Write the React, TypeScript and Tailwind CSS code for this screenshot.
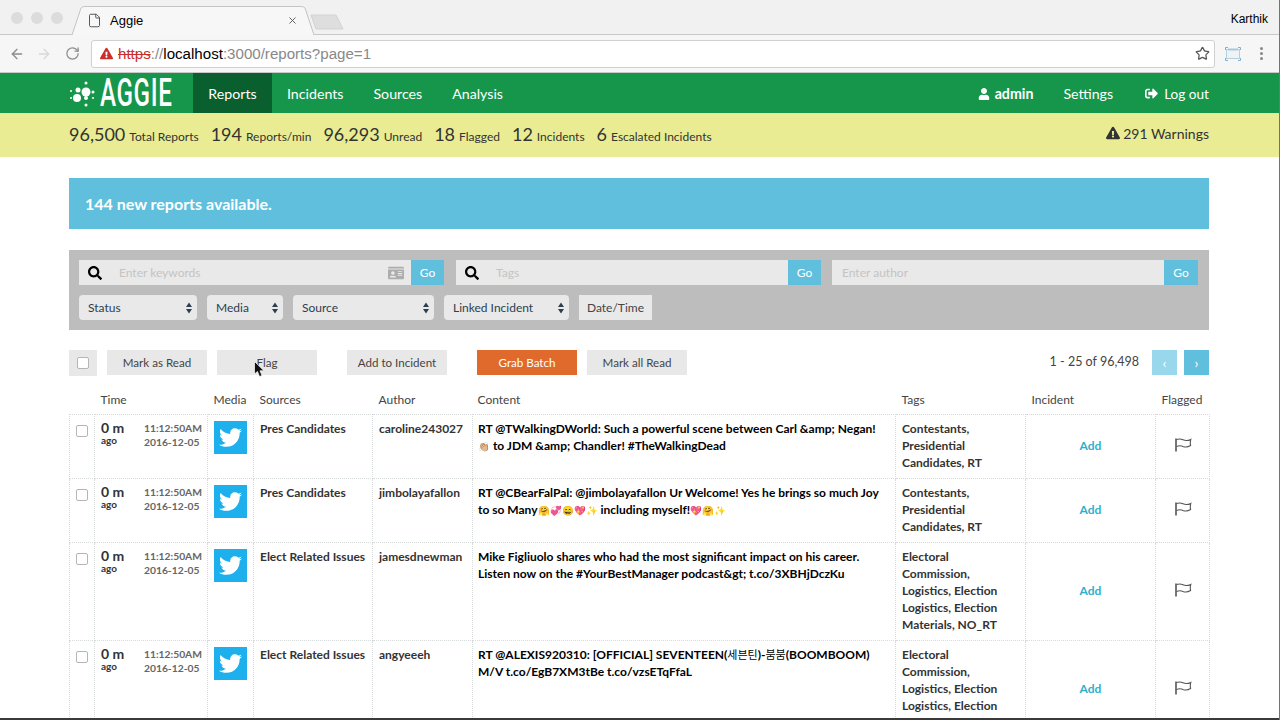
import type { ReactNode } from "react"
import { ArrowLeft, ArrowRight, RotateCw, Star, X, File } from "lucide-react"
import { FaSearch, FaUser, FaExclamationTriangle, FaTwitter, FaIdCard, FaSignOutAlt } from "react-icons/fa"

function Em({ children }: { children: ReactNode }) {
  return <span className="text-[9.5px] font-normal">{children}</span>
}

function Ko({ children }: { children: ReactNode }) {
  return <span className="text-[11px] font-normal">{children}</span>
}

const rows: { source: string; author: string; content: ReactNode; tags: string; h: string }[] = [
  {
    source: "Pres Candidates",
    author: "caroline243027",
    content: (
      <>
        RT @TWalkingDWorld: Such a powerful scene between Carl &amp;amp; Negan! <Em>👏🏼</Em> to JDM &amp;amp; Chandler! #TheWalkingDead
      </>
    ),
    tags: "Contestants, Presidential Candidates, RT",
    h: "h-[64px]",
  },
  {
    source: "Pres Candidates",
    author: "jimbolayafallon",
    content: (
      <>
        RT @CBearFalPal: @jimbolayafallon Ur Welcome! Yes he brings so much Joy to so Many<Em>🤗💞😄💖✨</Em> including myself!<Em>💖🤗✨</Em>
      </>
    ),
    tags: "Contestants, Presidential Candidates, RT",
    h: "h-[64px]",
  },
  {
    source: "Elect Related Issues",
    author: "jamesdnewman",
    content: "Mike Figliuolo shares who had the most significant impact on his career. Listen now on the #YourBestManager podcast&gt; t.co/3XBHjDczKu",
    tags: "Electoral Commission, Logistics, Election Logistics, Election Materials, NO_RT",
    h: "h-[98px]",
  },
  {
    source: "Elect Related Issues",
    author: "angyeeeh",
    content: (
      <>
        RT @ALEXIS920310: [OFFICIAL] SEVENTEEN(<Ko>세븐틴</Ko>)-<Ko>붐붐</Ko>(BOOMBOOM) M/V t.co/EgB7XM3tBe t.co/vzsETqFfaL
      </>
    ),
    tags: "Electoral Commission, Logistics, Election Logistics, Election Materials, NO_RT",
    h: "h-[98px]",
  },
]

function Carets() {
  return (
    <svg width="6" height="12" viewBox="0 0 6 12" className="text-[#2c3e50]" fill="currentColor">
      <path d="M3 0.5 L6 5 H0 Z M3 11.5 L0 7 H6 Z" />
    </svg>
  )
}

function Select({ label, w }: { label: string; w: string }) {
  return (
    <div className={`${w} h-[25px] flex items-center justify-between pl-[9px] pr-[5px] bg-[#e9e9e9] rounded-[4px] text-[12px] text-[#2c3e50]`}>
      {label}
      <Carets />
    </div>
  )
}

function SearchBox({ placeholder, w, goW = "w-[33px]", search, card }: { placeholder: string; w: string; goW?: string; search?: boolean; card?: boolean }) {
  return (
    <div className={`${w} h-[25px] flex bg-[#e9e9e9]`}>
      {search && (
        <div className="w-[40px] flex items-center pl-[9px] text-black">
          <FaSearch size={14} />
        </div>
      )}
      <div className={`flex-1 flex items-center text-[12px] text-[#c4c4c4] ${search ? "" : "pl-[10px]"}`}>{placeholder}</div>
      {card && (
        <div className="flex items-center pr-[7px] text-[#adadad]">
          <FaIdCard size={16} />
        </div>
      )}
      <div className={`${goW} flex items-center justify-center bg-[#5fbfdd] text-[12px] text-white`}>Go</div>
    </div>
  )
}

function ToolButton({ label, className }: { label: string; className: string }) {
  return <div className={`w-[100px] h-[25px] flex items-center justify-center pt-[1px] text-[11.6px] ${className}`}>{label}</div>
}

function Stat({ n, label }: { n: string; label: string }) {
  return (
    <span className="text-[12px] mr-[12px]">
      <span className="text-[18px] mr-[4px]">{n}</span>
      {label}
    </span>
  )
}

function FlagIcon() {
  return (
    <svg width="17" height="14" viewBox="0 0 17 14" fill="none" stroke="#555" strokeWidth="1.1">
      <path d="M1 0.5 V13.5" strokeWidth="1.6" />
      <path d="M1.5 1.5 C4 0.6 6 0.8 8 1.8 C10.5 3 13 2.8 15.8 1.4 C15.2 3.4 15 5 15.6 7.5 C13 9 10.5 9.4 8 8.4 C6 7.4 4 7.4 1.5 8.4" />
    </svg>
  )
}

function Logo() {
  return (
    <div className="flex items-center w-[124px]">
      <svg width="28" height="28" viewBox="0 0 28 28" fill="white" className="shrink-0">
        <circle cx="8" cy="19" r="4" />
        <circle cx="17" cy="13" r="4.5" />
        <circle cx="9" cy="11" r="2.5" />
        <circle cx="17" cy="4" r="1.5" />
        <circle cx="17" cy="19" r="2" />
        <circle cx="17" cy="26" r="1.5" />
        <circle cx="24" cy="13" r="1.5" />
        <circle cx="24" cy="19" r="1" />
        <circle cx="2" cy="12" r="1" />
        <circle cx="2" cy="19" r="1" />
      </svg>
      <span className="ml-[3px] font-['Roboto',sans-serif] text-[39px] leading-none font-medium text-white tracking-[1px] origin-left scale-x-[0.62] whitespace-nowrap">
        AGGIE
      </span>
    </div>
  )
}

export default function App() {
  return (
    <div className="h-screen overflow-hidden bg-white font-['Lato','Noto_Sans_CJK_KR',sans-serif] text-[#333] relative">
      {/* Browser chrome */}
      <div className="h-[35px] bg-[#f1f1f1] flex items-end border-b border-[#c8c8c8] relative">
        <div className="flex gap-[8px] pl-[11px] self-start pt-[12px] w-[72px]">
          <span className="w-[12px] h-[12px] rounded-full bg-[#dcdcdc]" />
          <span className="w-[12px] h-[12px] rounded-full bg-[#dcdcdc]" />
          <span className="w-[12px] h-[12px] rounded-full bg-[#dcdcdc]" />
        </div>
        <div className="relative w-[242px] h-[29px] -mb-[1px] flex items-center pl-[15px] pr-[16px] font-['Liberation_Sans',sans-serif] text-[13px] text-black">
          <svg className="absolute inset-0" width="242" height="29" viewBox="0 0 242 29" fill="#f7f7f7" stroke="#c4c4c4">
            <path d="M0 29 L9 2 Q10 0.5 13 0.5 H229 Q232 0.5 233 2 L242 29" />
          </svg>
          <File size={15} strokeWidth={1.4} className="relative text-[#444]" />
          <span className="relative ml-[8px] flex-1 pt-[1px]">Aggie</span>
          <X size={11} strokeWidth={2} className="relative text-[#555]" />
        </div>
        <svg className="mb-[4px] -ml-[4px]" width="34" height="16" viewBox="0 0 34 16" fill="#dedede" stroke="#d2d2d2">
          <path d="M1 1 H26 L33 15 H6 Z" />
        </svg>
        <span className="absolute right-[12px] top-[10px] font-['Liberation_Sans',sans-serif] text-[12px] text-black">Karthik</span>
      </div>
      <div className="h-[38px] bg-[#f6f6f6] flex items-center border-b border-[#c8c8c8]">
        <div className="w-[91px] flex items-center pl-[9px] shrink-0">
          <ArrowLeft size={16} className="text-[#8c8c8c]" />
          <ArrowRight size={16} className="ml-[11px] text-[#d8d8d8]" />
          <RotateCw size={15} className="ml-[13px] text-[#8c8c8c]" />
        </div>
        <div className="w-[1124px] h-[28px] bg-white border border-[#d0d0d0] rounded-[3px] flex items-center pl-[8px] pr-[4px] font-['Liberation_Sans',sans-serif] text-[15.1px]">
          <FaExclamationTriangle size={13} className="text-[#c9302c] mr-[5px]" />
          <span className="text-[#c9302c] line-through pt-[1px]">https</span>
          <span className="text-[#888] pt-[1px]">://</span>
          <span className="text-black pt-[1px]">localhost</span>
          <span className="text-[#888] pt-[1px]">:3000/reports?page=1</span>
          <Star size={15} className="ml-auto text-[#555]" />
        </div>
        <div className="flex-1 flex items-center pl-[10px] gap-[19px]">
          <svg width="16" height="14" viewBox="0 0 16 14" fill="none" stroke="#7fb2d0">
            <rect x="1.5" y="2.5" width="13" height="9" fill="#eef3f6" stroke="#b5cfdf" />
            <path d="M3 2.5 H13" strokeWidth="2" stroke="#a8c8dc" />
            <path d="M0.5 3 V0.5 H3 M13 0.5 H15.5 V3 M15.5 11 V13.5 H13 M3 13.5 H0.5 V11" />
          </svg>
          <div className="flex flex-col gap-[2px]">
            <span className="w-[3px] h-[3px] rounded-full bg-[#888]" />
            <span className="w-[3px] h-[3px] rounded-full bg-[#888]" />
            <span className="w-[3px] h-[3px] rounded-full bg-[#888]" />
          </div>
        </div>
      </div>

      {/* Nav */}
      <div className="h-[40px] bg-[#16964a] pl-[69px] pr-[71px] flex items-center text-white text-[14.2px]">
        <Logo />
        <div className="w-[79px] h-full flex items-center justify-center pt-[2px] bg-[#0a5f2e]">Reports</div>
        <div className="ml-[15px] pt-[2px]">Incidents</div>
        <div className="ml-[30px] pt-[2px]">Sources</div>
        <div className="ml-[30px] pt-[2px]">Analysis</div>
        <div className="ml-auto flex items-center font-bold pt-[2px]">
          <FaUser size={12} className="mr-[5px]" />
          admin
        </div>
        <div className="ml-[30px] pt-[2px]">Settings</div>
        <div className="ml-[32px] flex items-center pt-[2px] text-[13.6px]">
          <FaSignOutAlt size={13} className="mr-[6px]" />
          Log out
        </div>
      </div>

      {/* Stats */}
      <div className="h-[44px] bg-[#e9ec93] pl-[69px] pr-[71px] pb-[2px] flex items-center text-[#333]">
        <Stat n="96,500" label="Total Reports" />
        <Stat n="194" label="Reports/min" />
        <Stat n="96,293" label="Unread" />
        <Stat n="18" label="Flagged" />
        <Stat n="12" label="Incidents" />
        <Stat n="6" label="Escalated Incidents" />
        <div className="ml-auto flex items-center text-[14px] pb-[2px]">
          <FaExclamationTriangle size={14} className="mr-[3px]" />
          291 Warnings
        </div>
      </div>

      <div className="pl-[69px] pr-[71px] pt-[21px]">
        <div className="h-[51px] bg-[#5fbfdd] flex items-center pl-[16px] text-white text-[16px] font-bold">144 new reports available.</div>

        {/* Filters */}
        <div className="mt-[21px] h-[80px] bg-[#bdbdbd] p-[10px] flex flex-col gap-[10px]">
          <div className="flex">
            <SearchBox placeholder="Enter keywords" w="w-[365px]" search card />
            <div className="w-[12px]" />
            <SearchBox placeholder="Tags" w="w-[365px]" search />
            <div className="w-[11px]" />
            <SearchBox placeholder="Enter author" w="w-[366px]" goW="w-[34px]" />
          </div>
          <div className="flex gap-[10px]">
            <Select label="Status" w="w-[118px]" />
            <Select label="Media" w="w-[76px]" />
            <Select label="Source" w="w-[141px]" />
            <Select label="Linked Incident" w="w-[125px]" />
            <div className="w-[73px] h-[25px] flex items-center justify-center bg-[#e9e9e9] text-[12px] text-[#444]">Date/Time</div>
          </div>
        </div>

        {/* Actions */}
        <div className="mt-[20px] h-[26px] flex">
          <div className="w-[28px] h-[26px] bg-[#e8e8e8] flex items-center justify-center">
            <span className="w-[12px] h-[12px] bg-white rounded-[2px] border border-[#b5b5b5]" />
          </div>
          <ToolButton label="Mark as Read" className="ml-[10px] bg-[#e8e8e8] text-[#444]" />
          <ToolButton label="Flag" className="ml-[10px] bg-[#e8e8e8] text-[#444]" />
          <ToolButton label="Add to Incident" className="ml-[30px] bg-[#e8e8e8] text-[#444]" />
          <ToolButton label="Grab Batch" className="ml-[30px] bg-[#e06a2b] text-white" />
          <ToolButton label="Mark all Read" className="ml-[10px] bg-[#e8e8e8] text-[#444]" />
          <div className="ml-auto text-[12.5px] text-[#444] pt-[3px]">1 - 25 of 96,498</div>
          <div className="ml-[13px] w-[25px] h-[25px] bg-[#99d8ec] text-white flex items-center justify-center text-[14px]">‹</div>
          <div className="ml-[7px] w-[25px] h-[25px] bg-[#5fbfdd] text-white flex items-center justify-center text-[14px]">›</div>
        </div>

        {/* Reports table */}
        <table className="mt-[14px] w-[1140px] table-fixed border-collapse text-[12px]">
          <colgroup>
            <col className="w-[25px]" />
            <col className="w-[113px]" />
            <col className="w-[46px]" />
            <col className="w-[119px]" />
            <col className="w-[100px]" />
            <col className="w-[423px]" />
            <col className="w-[130px]" />
            <col className="w-[130px]" />
            <col className="w-[54px]" />
          </colgroup>
          <thead>
            <tr className="h-[24px] text-left align-top text-[12px] text-[#444]">
              <th />
              <th className="font-normal pl-[6px] pt-[1px]">Time</th>
              <th className="font-normal pl-[6px] pt-[1px]">Media</th>
              <th className="font-normal pl-[6px] pt-[1px]">Sources</th>
              <th className="font-normal pl-[6px] pt-[1px]">Author</th>
              <th className="font-normal pl-[5px] pt-[1px]">Content</th>
              <th className="font-normal pl-[6px] pt-[1px]">Tags</th>
              <th className="font-normal pl-[6px] pt-[1px]">Incident</th>
              <th className="font-normal pl-[6px] pt-[1px] whitespace-nowrap">Flagged</th>
            </tr>
          </thead>
          <tbody>
            {rows.map((r, i) => (
              <tr key={i} className={`${r.h} align-top leading-[17px] font-bold`}>
                <td className="border border-dotted border-[#d6dada] pl-[6px] pt-[10px]">
                  <span className="block w-[12px] h-[12px] bg-white rounded-[2px] border border-[#b5b5b5]" />
                </td>
                <td className="border border-dotted border-[#d6dada] pl-[6px] pt-[6px]">
                  <div className="flex justify-between pr-[5px]">
                    <div>
                      <div className="text-[14px] leading-[14px]">0 m</div>
                      <div className="text-[10px] leading-[11px]">ago</div>
                    </div>
                    <div className="text-[10.3px] leading-[14px] text-[#666]">
                      11:12:50AM
                      <br />
                      2016-12-05
                    </div>
                  </div>
                </td>
                <td className="border border-dotted border-[#d6dada] pl-[6px] pt-[6px]">
                  <div className="w-[33px] h-[33px] bg-[#1eb0ec] flex items-center justify-center text-white">
                    <FaTwitter size={23} />
                  </div>
                </td>
                <td className="border border-dotted border-[#d6dada] pl-[6px] pt-[5px] whitespace-nowrap">{r.source}</td>
                <td className="border border-dotted border-[#d6dada] pl-[6px] pt-[5px]">{r.author}</td>
                <td className="border border-dotted border-[#d6dada] pl-[5px] pr-[6px] pt-[5px] text-black">{r.content}</td>
                <td className="border border-dotted border-[#d6dada] pl-[6px] pr-[6px] pt-[5px]">{r.tags}</td>
                <td className="border border-dotted border-[#d6dada] text-center align-middle pb-[2px] text-[#2eb0cd]">Add</td>
                <td className="border border-dotted border-[#d6dada] align-middle pb-[2px]">
                  <div className="flex justify-center pl-[1px]">
                    <FlagIcon />
                  </div>
                </td>
              </tr>
            ))}
          </tbody>
        </table>
      </div>

      {/* Mouse pointer */}
      <svg className="absolute left-[254px] top-[361px]" width="11" height="17" viewBox="0 0 11 17">
        <path d="M0.5 0.5 V13 L3.5 10.5 L5.5 15.5 L8 14.5 L6 9.8 H10 Z" fill="#111" stroke="#fff" strokeWidth="0.7" />
      </svg>

      {/* Edge of the captured window */}
      <div className="absolute left-0 right-0 bottom-0 h-[2px] bg-[#3a3a3a]" />
      <div className="absolute top-0 bottom-0 right-0 w-[1px] bg-[#5a7a90]" />
    </div>
  )
}
